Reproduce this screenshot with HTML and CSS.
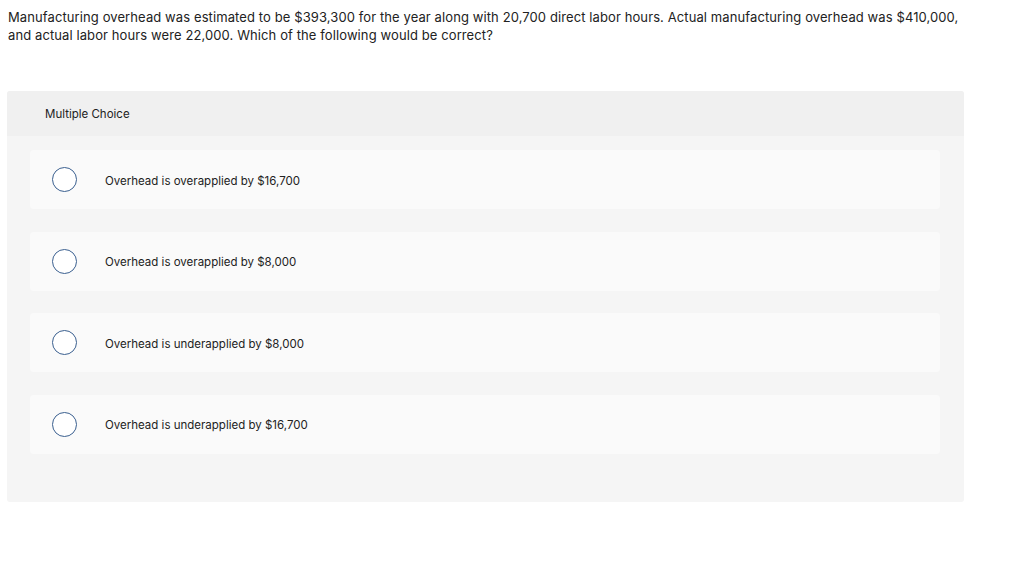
FILE: index.html
```html
<!DOCTYPE html>
<html>
<head>
<meta charset="utf-8">
<link rel="stylesheet" href="styles.css">
</head>
<body>
<div class="question">Manufacturing overhead was estimated to be $393,300 for the year along with 20,700 direct labor hours. Actual manufacturing overhead was $410,000, and actual labor hours were 22,000. Which of the following would be correct?</div>
<div class="mc">
  <div class="mc-header">Multiple Choice</div>
  <div class="mc-body">
    <div class="option"><span class="radio"></span><span class="label">Overhead is overapplied by $16,700</span></div>
    <div class="option"><span class="radio"></span><span class="label">Overhead is overapplied by $8,000</span></div>
    <div class="option"><span class="radio"></span><span class="label">Overhead is underapplied by $8,000</span></div>
    <div class="option"><span class="radio"></span><span class="label">Overhead is underapplied by $16,700</span></div>
  </div>
</div>
</body>
</html>
```

FILE: styles.css
```css
html, body {
  margin: 0;
  padding: 0;
  background: #fff;
}
body {
  font-family: "Inter", "Open Sans", sans-serif;
  color: #222;
  padding: 8px 7px 0 7px;
}
.question {
  font-size: 13px;
  line-height: 18px;
  letter-spacing: 0.1px;
  width: 965px;
  padding-left: 1px;
}
.mc {
  margin-top: 47px;
  width: 957px;
  background: #f5f5f5;
  border-radius: 3px;
  overflow: hidden;
  height: 411px;
}
.mc-header {
  background: #f0f0f0;
  height: 45px;
  display: flex;
  align-items: center;
  padding-left: 38px;
  padding-top: 1px;
  box-sizing: border-box;
  font-size: 11.5px;
}
.mc-body {
  padding: 14px 24px 0 23px;
  display: flex;
  flex-direction: column;
  gap: 22.5px;
}
.option {
  background: #fafafa;
  border-radius: 4px;
  height: 59px;
  display: flex;
  align-items: center;
  padding-left: 22px;
}
.radio {
  width: 25px;
  height: 25px;
  border: 1px solid #3a5f8f;
  border-radius: 50%;
  box-sizing: border-box;
  background: #fff;
  flex: none;
}
.label {
  margin-left: 28px;
  padding-top: 2px;
  font-size: 11.5px;
}
```
